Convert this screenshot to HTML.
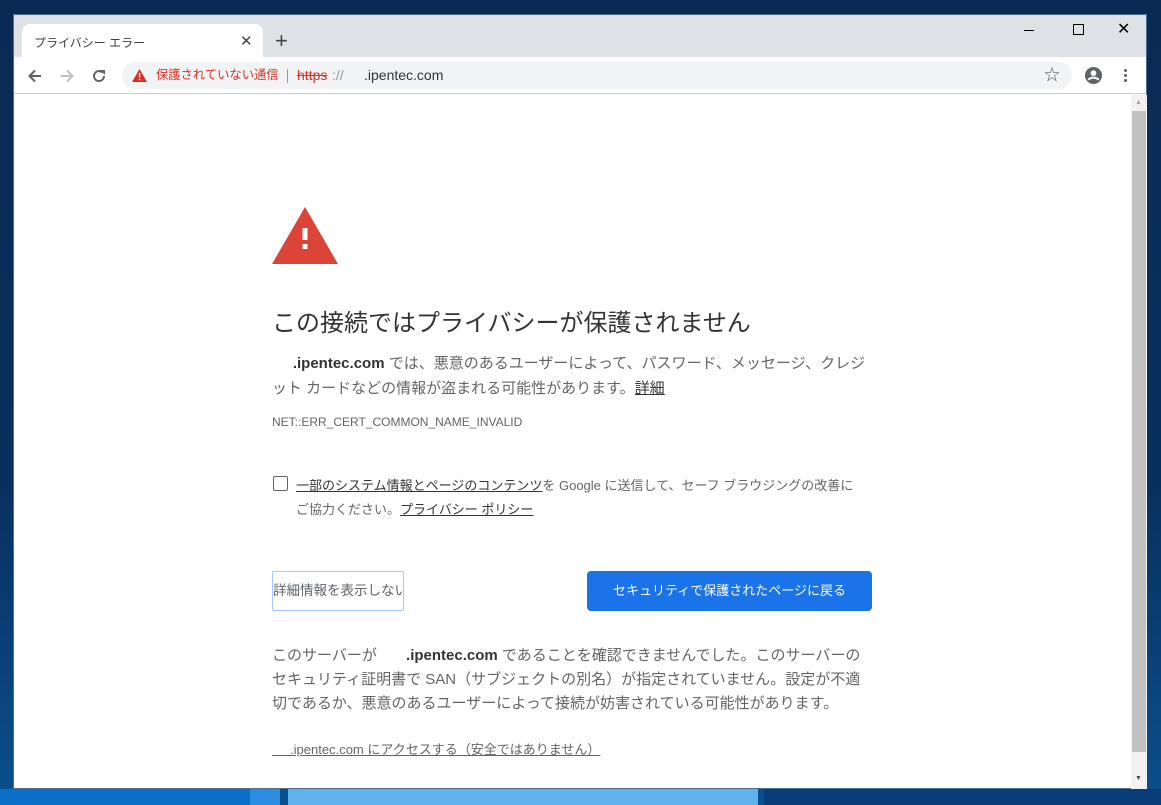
<!DOCTYPE html>
<html><head><meta charset="utf-8"><style>
*{margin:0;padding:0;box-sizing:border-box}
body{width:1161px;height:805px;overflow:hidden;background:linear-gradient(180deg,#0a2a55 0%,#08305e 60%,#0a4f8e 100%);font-family:"Liberation Sans","Noto Sans CJK JP",sans-serif;position:relative}
.strip{position:absolute;top:789px;height:16px}
.win{position:absolute;left:13px;top:14px;width:1134px;height:775px;background:#fff;border:1px solid #4a6d90}
.tabs{position:absolute;left:0;top:0;width:100%;height:42px;background:#dee1e6}
.tab{position:absolute;left:8px;top:9px;width:241px;height:34px;background:#fff;border-radius:8px 8px 0 0;font-size:12px;color:#3c4043;padding:10px 0 0 12px}
.tb{position:absolute;left:0;top:42px;width:100%;height:37px;background:#fff;border-bottom:1px solid #ccc}
.omni{position:absolute;left:108px;top:5px;width:950px;height:27px;background:#f1f3f4;border-radius:14px;font-size:14px;line-height:27px}
.content{position:absolute;left:0;top:80px;width:1117px;height:694px;color:#333}
.sb{position:absolute;left:1117px;top:80px;width:16px;height:694px;background:#f1f1f1}
.t{position:absolute;left:258px;white-space:nowrap}
u{text-decoration:underline}
</style></head><body>
<div class="strip" style="left:0;width:250px;background:#0a6fc9"></div>
<div class="strip" style="left:250px;width:30px;background:#2a8de0"></div>
<div class="strip" style="left:288px;width:470px;background:#5fb2ec"></div>
<div class="strip" style="left:764px;width:397px;background:#083e78"></div>
<div class="win">
 <div class="tabs">
  <div class="tab">プライバシー エラー<span style="position:absolute;left:218px;top:8px;font-size:15px;color:#444">✕</span></div>
  <div style="position:absolute;left:261px;top:13px;font-size:22px;color:#444">+</div>
  <div style="position:absolute;left:1010px;top:15px;width:10px;height:1px;background:#000"></div>
  <div style="position:absolute;left:1059px;top:9px;width:11px;height:11px;border:1px solid #000"></div>
  <div style="position:absolute;left:1103px;top:4px;font-size:16px;color:#000">✕</div>
 </div>
 <div class="tb">
  <svg style="position:absolute;left:12px;top:10px" width="18" height="18" viewBox="0 0 18 18"><path d="M15 9H4M9 3.5L3.5 9 9 14.5" stroke="#5f6368" stroke-width="2" fill="none"/></svg>
  <svg style="position:absolute;left:44px;top:10px" width="18" height="18" viewBox="0 0 18 18"><path d="M3 9h11M9 3.5L14.5 9 9 14.5" stroke="#bdc1c6" stroke-width="2" fill="none"/></svg>
  <svg style="position:absolute;left:76px;top:10px" width="18" height="18" viewBox="0 0 18 18"><path d="M14 9A5 5 0 1 1 12.5 5.5" stroke="#5f6368" stroke-width="2" fill="none"/><path d="M10 3h5v5z" fill="#5f6368"/></svg>
  <div class="omni">
   <svg style="position:absolute;left:10px;top:7px" width="15" height="13" viewBox="0 0 15 13"><path d="M7.5 0L15 13H0z" fill="#d93025"/><rect x="6.8" y="4" width="1.5" height="4.5" fill="#fff"/><rect x="6.8" y="9.7" width="1.5" height="1.5" fill="#fff"/></svg>
   <span style="position:absolute;left:34px;color:#d93025;font-size:12.3px">保護されていない通信</span>
   <span style="position:absolute;left:165px;top:7px;width:1px;height:14px;background:#999"></span>
   <span style="position:absolute;left:175px;color:#d93025;text-decoration:line-through">https</span><span style="position:absolute;left:210px;color:#999">://</span>
   <span style="position:absolute;left:242px;color:#333">.ipentec.com</span>
   <span style="position:absolute;left:922px;top:0;font-size:16px;color:#5f6368">☆</span>
  </div>
  <svg style="position:absolute;left:1070px;top:9px" width="19" height="19" viewBox="0 0 20 20"><circle cx="10" cy="10" r="9" fill="#5f6368"/><circle cx="10" cy="7.5" r="3" fill="#fff"/><path d="M4.5 14.5c3-3 8-3 11 0" stroke="#fff" stroke-width="2.2" fill="none"/></svg>
  <div style="position:absolute;left:1110px;top:11px;width:3px;height:14px;background:radial-gradient(circle,#5f6368 1.4px,transparent 1.6px) 0 0/3px 5px"></div>
 </div>
 <div class="content">
  <svg style="position:absolute;left:258px;top:112px" width="66" height="57" viewBox="0 0 66 57"><path d="M33 0L66 57H0z" fill="#db4437"/><rect x="30.5" y="21" width="5" height="12" fill="#fff"/><rect x="30.5" y="37" width="5" height="5" fill="#fff"/></svg>
  <div class="t" style="top:208px;font-size:24px;color:#333">この接続ではプライバシーが保護されません</div>
  <div class="t" style="top:256px;font-size:15px;line-height:25px;color:#646464;white-space:normal;width:600px">&nbsp; &nbsp; &nbsp;<b style="color:#333">.ipentec.com</b> では、悪意のあるユーザーによって、パスワード、メッセージ、クレジット カードなどの情報が盗まれる可能性があります。<u style="color:#333">詳細</u></div>
  <div class="t" style="top:320px;font-size:12px;color:#646464">NET::ERR_CERT_COMMON_NAME_INVALID</div>
  <div style="position:absolute;left:259px;top:381px;width:15px;height:15px;border:1px solid #5f6368;border-radius:2px"></div>
  <div class="t" style="left:282px;top:379px;font-size:13px;line-height:24px;color:#646464"><u style="color:#333">一部のシステム情報とページのコンテンツ</u>を Google に送信して、セーフ ブラウジングの改善に<br>ご協力ください。<u style="color:#333">プライバシー ポリシー</u></div>
  <div style="position:absolute;left:258px;top:476px;width:132px;height:40px;border:1px solid #a6c8ff;border-radius:2px;font-size:13.5px;line-height:38px;color:#5f6368;white-space:nowrap;overflow:hidden">詳細情報を表示しない</div>
  <div style="position:absolute;left:573px;top:476px;width:285px;height:40px;background:#1a73e8;border-radius:4px;font-size:13px;line-height:40px;color:#fff;text-align:center">セキュリティで保護されたページに戻る</div>
  <div class="t" style="top:549px;font-size:15px;line-height:24px;color:#646464;white-space:normal;width:595px">このサーバーが &nbsp; &nbsp; &nbsp; <b style="color:#333">.ipentec.com</b> であることを確認できませんでした。このサーバーのセキュリティ証明書で SAN（サブジェクトの別名）が指定されていません。設定が不適切であるか、悪意のあるユーザーによって接続が妨害されている可能性があります。</div>
  <div class="t" style="top:644px;font-size:13px;color:#646464"><u>&nbsp; &nbsp; &nbsp;.ipentec.com にアクセスする（安全ではありません）</u></div>
 </div>
 <div class="sb">
  <div style="position:absolute;left:1px;top:16px;width:14px;height:641px;background:#c1c1c1"></div>
  <div style="position:absolute;left:4px;top:4px;font-size:7px;color:#a3a3a3">▲</div>
  <div style="position:absolute;left:4px;top:680px;font-size:7px;color:#505050">▼</div>
 </div>
</div>
</body></html>
